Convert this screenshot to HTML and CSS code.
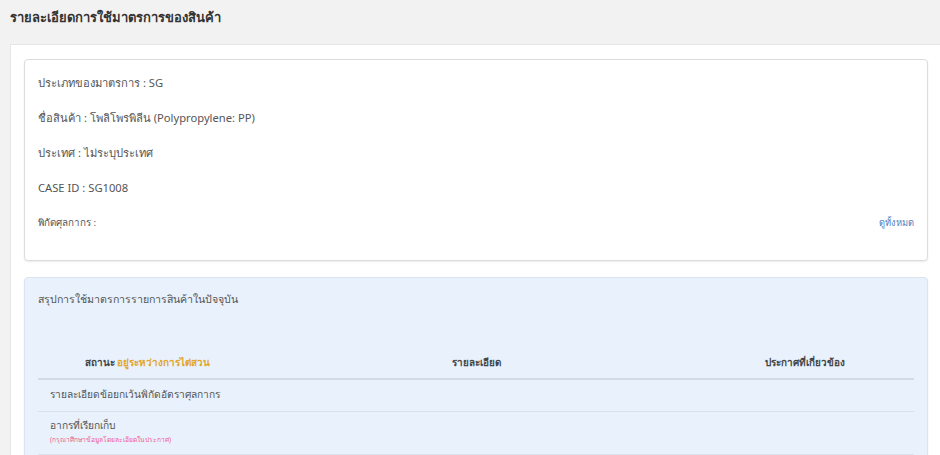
FILE: index.html
```html
<!DOCTYPE html>
<html lang="th">
<head>
<meta charset="utf-8">
<title>รายละเอียดการใช้มาตรการของสินค้า</title>
<link rel="stylesheet" href="styles.css">
</head>
<body>
<h1 class="page-title">รายละเอียดการใช้มาตรการของสินค้า</h1>
<main class="panel">
  <section class="card info-card">
    <div class="info-row">ประเภทของมาตรการ : SG</div>
    <div class="info-row">ชื่อสินค้า : โพลิโพรพิลีน (Polypropylene: PP)</div>
    <div class="info-row">ประเทศ : ไม่ระบุประเทศ</div>
    <div class="info-row">CASE ID : SG1008</div>
    <div class="info-row info-row-small">
      <span>พิกัดศุลกากร :</span>
      <a class="view-all" href="#">ดูทั้งหมด</a>
    </div>
  </section>
  <section class="card summary-card">
    <h2 class="summary-title">สรุปการใช้มาตรการรายการสินค้าในปัจจุบัน</h2>
    <table class="summary-table">
      <thead>
        <tr>
          <th class="col-side">สถานะ <span class="status">อยู่ระหว่างการไต่สวน</span></th>
          <th class="col-mid">รายละเอียด</th>
          <th class="col-side">ประกาศที่เกี่ยวข้อง</th>
        </tr>
      </thead>
      <tbody>
        <tr>
          <td colspan="3">รายละเอียดข้อยกเว้นพิกัดอัตราศุลกากร</td>
        </tr>
        <tr>
          <td colspan="3">อากรที่เรียกเก็บ<div class="note">(กรุณาศึกษาข้อมูลโดยละเอียดในประกาศ)</div></td>
        </tr>
      </tbody>
    </table>
  </section>
</main>
</body>
</html>
```

FILE: styles.css
```css
html, body {
  margin: 0;
  padding: 0;
}
body {
  background: #f2f2f2;
  font-family: "Noto Sans", "Open Sans", sans-serif;
  color: #555;
  overflow: hidden;
}
.page-title {
  margin: 0;
  padding: 6px 10px 0;
  height: 38px;
  font-size: 13px;
  line-height: 22px;
  font-weight: 700;
  color: #333;
}
.panel {
  margin: 0 -10px 0 10px;
  background: #fff;
  border: 1px solid #e6e6e6;
  padding: 14px 21px 0 13px;
  min-height: 420px;
}
.card {
  border: 1px solid #dcdcdc;
  border-radius: 4px;
  box-shadow: 0 1px 2px rgba(0,0,0,0.08);
}
.info-card {
  background: #fff;
  padding: 5px 13px 20px;
  margin-bottom: 16px;
}
.info-row {
  height: 35px;
  line-height: 35px;
  font-size: 11.2px;
  color: #555;
}
.info-row-small {
  font-size: 9.8px;
  display: flex;
  justify-content: space-between;
  align-items: center;
  line-height: 31px;
  height: 35px;
}
.view-all {
  color: #4b7cc0;
  text-decoration: none;
  font-size: 9.3px;
}
.summary-card {
  background: #e8f1fc;
  border-color: #dbe4ef;
  padding: 10px 13px 20px;
}
.summary-title {
  margin: 0 0 36px;
  font-size: 10.6px;
  line-height: 22px;
  font-weight: 400;
  color: #555;
}
.summary-table {
  width: 100%;
  border-collapse: collapse;
  font-size: 10.2px;
}
.summary-table th {
  height: 32px;
  font-size: 9.9px;
  font-weight: 700;
  color: #444;
  text-align: center;
  border-bottom: 2px solid #d3dbe6;
  padding: 0;
}
.col-side { width: 25%; }
.col-mid { width: 50%; }
.status {
  color: #e2a52a;
}
.summary-table td {
  padding: 6px 12px 8px;
  border-bottom: 1px solid #d8e1ec;
  color: #555;
  line-height: 17px;
}
.summary-table tbody tr:first-child td {
  height: 17px;
}
.summary-table tbody tr:nth-child(2) td {
  padding-top: 5px;
  padding-bottom: 9px;
}
.note {
  font-size: 6.6px;
  line-height: 11px;
  color: #ef5b8c;
}
```
